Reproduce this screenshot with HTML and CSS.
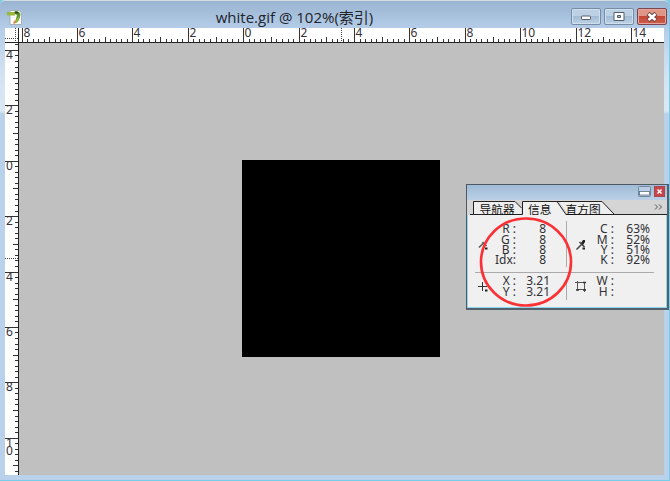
FILE: index.html
```html
<!DOCTYPE html>
<html lang="zh">
<head>
<meta charset="utf-8">
<title>white.gif</title>
<link rel="stylesheet" href="styles.css">
</head>
<body>
<main class="window">
  <header class="titlebar">
    <svg class="app-icon" width="17" height="17" viewBox="0 0 17 17">
      <path d="M3 1.500h9l2.500 2.500v11.500H3z" fill="#fafcf7" stroke="#9ba6aa" stroke-width=".8"/>
      <path d="M0 3h8v3.500H0z" fill="#98b83a"/>
      <path d="M8 2.500q4-1 5.500 2.500 0 4-3 8l-2.500 1 1-4 1-4-2-1z" fill="#5d9430"/>
      <path d="M9 11l3-4-.5 5-2.500 2z" fill="#91bd32"/>
      <path d="M6.500 13l2-2.500v3.500l-2 1z" fill="#ed7841"/>
      <path d="M7.500 2.500h3l1.500 2H8z" fill="#2c4a20"/>
    </svg>
    <h1 class="title">white.gif @ 102%(索引)</h1>
    <div class="controls">
      <span class="control"><svg width="12" height="8" viewBox="0 0 12 8"><rect x="1.500" y="3" width="9" height="3.500" rx=".7" fill="#fff" stroke="#535d68"/></svg></span>
      <span class="control"><svg width="12" height="9" viewBox="0 0 12 9"><path fill-rule="evenodd" d="M1 .5h10v8H1zM4.500 3.500v2h3v-2z" fill="#fff" stroke="#535d68"/></svg></span>
      <span class="control close"><svg width="12" height="10" viewBox="0 0 12 10"><path d="M2 1.500l8 7M10 1.500L2 8.500" stroke="#6b4346" stroke-width="4.500"/><path d="M2.500 2l7 6M9.500 2l-7 6" stroke="#fff" stroke-width="2.700"/></svg></span>
    </div>
  </header>
  <section class="workspace">
    <svg class="corner" width="14" height="15"><path d="M0 10.500h14M10.500 0v15" stroke="#444" stroke-dasharray="1 1"/><path d="M0 14.500h14M13.500 0v15" stroke="#222"/></svg>
    <svg class="ruler-x" width="645" height="15"></svg>
    <svg class="ruler-y" width="14" height="432"></svg>
    <div class="canvas"><div class="image"></div></div>
  </section>
</main>
<aside class="panel">
  <div class="panel-bar">
    <svg width="13" height="11"><rect x=".5" y=".5" width="12" height="10" rx="1" fill="#b9cee4" stroke="#73879b"/><rect x="1.500" y="5.500" width="10" height="3.500" fill="#fff" stroke="#5e6f80" stroke-width=".8"/></svg>
    <svg width="11" height="11"><rect x=".5" y=".5" width="10" height="10" fill="#c84449" stroke="#a9474d"/><path d="M3.500 3.500l4 4M7.500 3.500l-4 4" stroke="#fff" stroke-width="1.500"/></svg>
  </div>
  <svg class="tabs" width="200" height="15" viewBox="0 0 200 15">
    <rect width="200" height="15" fill="#d5d5d5"/>
    <path d="M6.500 14V1.500H48L54 8V14zM92 1.500h43L147 14H101z" fill="#eee"/>
    <path d="M55.500 15V1.500H90L99 15z" fill="#f0f0f0"/>
    <path d="M3 14.500h52.500V1.500H90L99 14.500h101M6.500 14V1.500H48L54.500 8M90 1.500h45L147 14" fill="none" stroke="#222"/>
    <text x="12.500" y="13.500">导航器</text><text x="61" y="13.500">信息</text><text x="98.500" y="13.500">直方图</text>
    <path d="M188 4.500l2.500 2.500-2.500 2.500M192 4.500l2.500 2.500-2.500 2.500" fill="none" stroke="#555"/>
  </svg>
  <div class="readings">
    <section class="cell colour">
      <svg width="12" height="14"><path d="M2 9.500l4-4M5.500 4l4 4" stroke="#555" stroke-width="1.500"/><path d="M8 10.500h2.500" stroke="#222" stroke-width="2"/></svg>
      <dl><dt>R :</dt><dd>8</dd><dt>G :</dt><dd>8</dd><dt>B :</dt><dd>8</dd><dt>Idx:</dt><dd>8</dd></dl>
    </section>
    <section class="cell cmyk">
      <svg width="12" height="14"><path d="M1.500 11.500l5-5M4.500 4l5 5" stroke="#444" stroke-width="1.500"/><path d="M6 5l2-3h2v2L8 7z" fill="#222"/><path d="M7.500 10.500h2.500" stroke="#222" stroke-width="2"/></svg>
      <dl><dt>C :</dt><dd>63%</dd><dt>M :</dt><dd>52%</dd><dt>Y :</dt><dd>51%</dd><dt>K :</dt><dd>92%</dd></dl>
    </section>
    <section class="cell position">
      <svg width="12" height="14"><path d="M1 6.500h9M5.500 2v9" stroke="#333"/><path d="M8 10.500h2.500" stroke="#222" stroke-width="2"/></svg>
      <dl><dt>X :</dt><dd>3.21</dd><dt>Y :</dt><dd>3.21</dd></dl>
    </section>
    <section class="cell size">
      <svg width="12" height="14"><path d="M0 2.500h9.500V12M2.500 1v8.500H11" fill="none" stroke="#555"/><path d="M8 2.500h3M1 10h3M8 10h3" stroke="#333" stroke-width="1.700"/></svg>
      <dl><dt>W :</dt><dd></dd><dt>H :</dt><dd></dd></dl>
    </section>
  </div>
  <svg class="highlight" width="94" height="94" viewBox="0 0 94 94"><ellipse cx="47" cy="47" rx="45" ry="43.500" fill="none" stroke="#fa3236" stroke-width="2.600"/></svg>
</aside>
<script src="rulers.js"></script>
</body>
</html>
```
FILE: styles.css
```css
* { box-sizing: border-box; }
body { margin: 0; width: 670px; height: 481px; overflow: hidden; background: #75cde9; font-family: "Noto Sans", "Noto Sans CJK SC", sans-serif; }
.window { width: 669px; height: 480px; padding: 0 5px; border-top: 1px solid #d1dce3; border-radius: 5px 5px 0 0; background: linear-gradient(#99b4d1 0, #b5cde8 28px, #d3e2f2 72px, #dbe8f5 110px, #b9d1ea 113px, #b9d1ea); }
.titlebar { display: grid; grid-template-columns: 120px 1fr 200px; height: 27px; align-items: start; }
.app-icon { margin: 8px 0 0 2px; }
.title { margin: 5px 0 0; text-align: center; white-space: nowrap; color: #20242b; font: 15px/22px "Open Sans", "Noto Sans CJK SC", sans-serif; }
.controls { display: flex; gap: 3px; justify-content: flex-end; padding: 7px 0 0; margin-right: -3px; }
.control { display: flex; align-items: center; justify-content: center; width: 30px; height: 17px; border: 1px solid #778da5; border-radius: 2px; box-shadow: inset 0 0 0 1px #d0dfed; background: linear-gradient(#bdd1e5 48%, #a2bcd6 50%, #bed2e5); }
.close { border-color: #7b4651; box-shadow: inset 0 0 0 1px #e5a59a; background: linear-gradient(#df9687 45%, #c54634 50%, #cc604f); }
.workspace { display: grid; grid-template-columns: 14px 645px; grid-template-rows: 15px 432px; width: 659px; height: 447px; background: #fff; }
.workspace svg { display: block; }
.ruler-x text, .ruler-y text { font: 12px "Noto Sans", sans-serif; fill: #35303b; }
.canvas { padding: 117px 0 0 223px; background: #c0c0c0; }
.image { width: 198px; height: 197px; background: #000; }
.panel { position: absolute; left: 466px; top: 184px; width: 203px; height: 126px; border: 1px solid #4e5962; border-width: 1px 2px 2px 1px; border-right-color: #53616d; border-bottom-color: #53616d; background: #f0f0f0; box-shadow: inset 1px -1px #8bd5ed, inset -1px 0 #8bd5ed; }
.panel-bar { display: flex; justify-content: flex-end; gap: 3px; height: 15px; padding: 1px 2px 0 0; background: linear-gradient(#a0bbd7, #bbd0e6); }
.tabs { display: block; }
.tabs text { font: 11.700px "Noto Sans CJK SC", sans-serif; fill: #111; }
.readings { display: grid; grid-template-columns: 92px 87px; grid-template-rows: 57px 32px; margin: 1px 0 0 8px; color: #303035; font-size: 12px; line-height: 10.400px; }
.cell { display: grid; grid-template-columns: 12px 1fr; column-gap: 4px; align-items: center; padding-left: 2px; }
.cell dl { display: grid; grid-template-columns: 23px 1fr; grid-auto-rows: 10.400px; margin: 0; }
.cell dt { display: flex; justify-content: flex-end; white-space: nowrap; }
.cell dd { margin: 0; text-align: right; }
.colour, .cmyk { padding-top: 2px; border-bottom: 1px solid #aaa; }
.colour dl { padding-right: 21px; }
.position dl { padding-right: 17px; }
.position, .size { padding-bottom: 5px; }
.cmyk, .size { padding-left: 8px; }
.cmyk dl, .size dl { padding-right: 4px; }
.colour, .position { background: linear-gradient(#aaa, #aaa) 100% 50% / 1px calc(100% - 10px) no-repeat; }
.highlight { position: absolute; left: 12px; top: 30px; }
```
FILE: rulers.js
```js
const NS = 'http://www.w3.org/2000/svg';
function add(parent, name, attributes, text) {
  const node = document.createElementNS(NS, name);
  for (const key in attributes) node.setAttribute(key, attributes[key]);
  if (text) node.textContent = text;
  parent.append(node);
}
const xRuler = document.querySelector('.ruler-x');
const yRuler = document.querySelector('.ruler-y');
const step = 5.54;
for (let i = -40; i <= 74; i++) {
  const x = Math.floor(224.7 + i * step) + 0.5;
  const length = i % 10 === 0 ? 15 : i % 5 === 0 ? 6 : 4;
  add(xRuler, 'path', { d: `M${x} ${15 - length}v${length}`, stroke: '#333' });
  if (i % 10 === 0) add(xRuler, 'text', { x: x + 1, y: 8.5 }, String(Math.abs(i / 5)));
}
for (let i = -21; i <= 56; i++) {
  const y = Math.floor(118.2 + i * step) + 0.5;
  const length = i % 10 === 0 ? 14 : i % 5 === 0 ? 6 : 4;
  add(yRuler, 'path', { d: `M${14 - length} ${y}h${length}`, stroke: '#333' });
  if (i % 10 === 0) {
    [...String(Math.abs(i / 5))].forEach((digit, index) => {
      add(yRuler, 'text', { x: 1, y: y + 8.5 + index * 8 }, digit);
    });
  }
}
add(xRuler, 'path', { d: 'M0 14.5h645', stroke: '#222' });
add(xRuler, 'path', { d: 'M322.5 0v15', stroke: '#444', 'stroke-dasharray': '1 1' });
add(yRuler, 'path', { d: 'M13.5 0v432', stroke: '#222' });
add(yRuler, 'path', { d: 'M0 215.5h14', stroke: '#444', 'stroke-dasharray': '1 1' });
```
